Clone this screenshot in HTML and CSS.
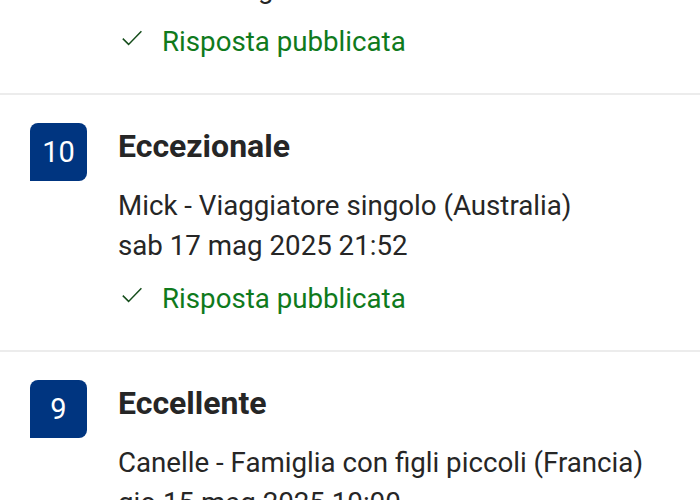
FILE: index.html
```html
<!DOCTYPE html>
<html lang="it">
<head>
	<meta charset="UTF-8">
	<meta name="viewport" content="width=device-width, initial-scale=1.0">
	<title>Recensioni</title>
	<link rel="stylesheet" href="styles.css">
</head>
<body>
	<div id="reviews">
		<div class="review">
			<div class="score">10</div>
			<div class="body">
				<div class="title">Eccezionale</div>
				<div class="meta">Lorena - Coppia (Italia)</div>
				<div class="meta">dom 18 mag 2025 09:31</div>
				<div class="reply">
					<svg class="check" viewBox="0 0 20 16" width="20" height="16"><path d="M0.8 8.6 L6.6 14.4 L19.4 1.2" fill="none" stroke="currentColor" stroke-width="1.5"/></svg>
					<span>Risposta pubblicata</span>
				</div>
			</div>
		</div>

		<div class="review">
			<div class="score">10</div>
			<div class="body">
				<div class="title">Eccezionale</div>
				<div class="meta">Mick - Viaggiatore singolo (Australia)</div>
				<div class="meta">sab 17 mag 2025 21:52</div>
				<div class="reply">
					<svg class="check" viewBox="0 0 20 16" width="20" height="16"><path d="M0.8 8.6 L6.6 14.4 L19.4 1.2" fill="none" stroke="currentColor" stroke-width="1.5"/></svg>
					<span>Risposta pubblicata</span>
				</div>
			</div>
		</div>

		<div class="review">
			<div class="score">9</div>
			<div class="body">
				<div class="title">Eccellente</div>
				<div class="meta">Canelle - Famiglia con figli piccoli (Francia)</div>
				<div class="meta">gio 15 mag 2025 10:00</div>
				<div class="reply">
					<svg class="check" viewBox="0 0 20 16" width="20" height="16"><path d="M0.8 8.6 L6.6 14.4 L19.4 1.2" fill="none" stroke="currentColor" stroke-width="1.5"/></svg>
					<span>Risposta pubblicata</span>
				</div>
			</div>
		</div>
	</div>
</body>
</html>
```

FILE: styles.css
```css
:root{
	--blue: #003580;
	--green: #0f7a1c;
	--text: #262626;
	--line: #ececec;
}

body{
	margin: 0;
	background: #fff;
	font-family: Roboto, "Noto Sans", Arial, sans-serif;
	color: var(--text);
	overflow: hidden;
}

/* the list is scrolled: first card only shows its last lines */
#reviews{
	margin-top: -162px;
}

.review{
	display: flex;
	gap: 31px;
	padding: 28px 0 31.5px 30px;
	border-bottom: 2px solid var(--line);
}

.score{
	flex: 0 0 57px;
	height: 58px;
	background: var(--blue);
	color: #fff;
	border-radius: 8px 8px 8px 0;
	display: flex;
	justify-content: center;
	align-items: center;
	font-size: 29px;
}

.body{
	display: flex;
	flex-direction: column;
	padding-top: 3px;
}

.title{
	font-size: 32px;
	font-weight: bold;
	line-height: 40px;
	margin-bottom: 19.5px;
}

.meta{
	font-size: 27.7px;
	line-height: 40px;
}

.reply{
	display: flex;
	align-items: center;
	gap: 20px;
	margin-top: 13px;
	font-size: 27.7px;
	line-height: 40px;
	color: var(--green);
}

.check{
	color: #154d1b;
	margin-left: 4px;
	margin-top: -7px;
}
```
